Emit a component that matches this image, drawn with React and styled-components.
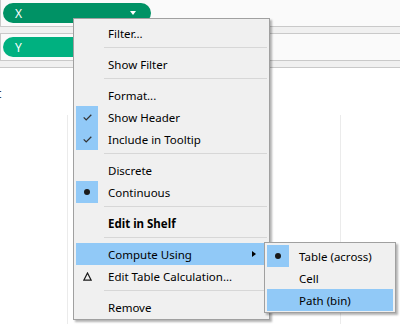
import React from 'react';
import styled, { createGlobalStyle } from 'styled-components';

const GlobalStyle = createGlobalStyle`
  html, body {
    margin: 0;
    padding: 0;
  }
  body {
    width: 400px;
    height: 324px;
    overflow: hidden;
    background: #ffffff;
    font-family: "Noto Sans", "Liberation Sans", sans-serif;
  }
`;

const Page = styled.div`
  position: relative;
  width: 400px;
  height: 324px;
  display: flex;
  flex-direction: column;
  overflow: hidden;
`;

const Shelves = styled.div`
  display: flex;
  flex-direction: column;
  gap: 6px;
  margin-top: -1px;
  padding-bottom: 6px;
  background: #f0f0f0;
`;

const ShelfRow = styled.div`
  height: 26px;
  display: flex;
  align-items: center;
  padding-left: 2px;
  background: #fafafa;
  border: 1px solid #c9c9c9;
  border-right: none;
`;

const Pill = styled.div`
  width: 148px;
  height: 20px;
  box-sizing: border-box;
  display: flex;
  align-items: center;
  padding: 0 15px 0 12px;
  border-radius: 10px;
  background: ${p => (p.$open ? '#009265' : '#00b180')};
  color: #ffffff;
  font-size: 12px;
`;

const Caret = styled.span`
  margin-left: auto;
  width: 0;
  height: 0;
  border-left: 3px solid transparent;
  border-right: 3px solid transparent;
  border-top: 4px solid #ffffff;
`;

const Canvas = styled.div`
  flex: 1;
  display: flex;
  flex-direction: column;
  background: #ffffff;
  border-top: 1px solid #c9c9c9;
`;

const CanvasHeader = styled.div`
  height: 47px;
  box-sizing: border-box;
  padding-top: 17px;
`;

const AxisLabel = styled.span`
  display: block;
  margin-left: -3px;
  font-size: 12px;
  color: #333c48;
`;

const GridBody = styled.div`
  flex: 1;
  display: grid;
  grid-template-columns: 68px 273px 1fr;
`;

const GridCell = styled.div`
  box-sizing: border-box;
  border-right: ${p => (p.$last ? 'none' : '1px solid #ebebeb')};
`;

const Menu = styled.div`
  position: absolute;
  left: 73px;
  top: 18px;
  width: 197px;
  box-sizing: border-box;
  padding: 3px 2px 1px;
  background: #f0f0f0;
  border: 1px solid #a0a0a0;
  box-shadow: 2px 2px 2px rgba(0, 0, 0, 0.3);
  font-size: 11.5px;
  color: #000000;
  z-index: 10;
`;

const SubMenu = styled(Menu)`
  left: calc(100% - 3px);
  top: -1px;
  width: 132px;
  padding: 2px 2px 1px;
  z-index: 20;
`;

const Item = styled.div`
  position: relative;
  height: 22px;
  display: grid;
  grid-template-columns: 22px 1fr auto;
  column-gap: 10px;
  align-items: center;
  background: ${p => (p.$active ? '#91c9f7' : 'transparent')};
  font-weight: ${p => (p.$bold ? 700 : 400)};
  white-space: nowrap;
`;

const IconCell = styled.span`
  width: 22px;
  height: 22px;
  display: flex;
  align-items: center;
  justify-content: center;
  background: ${p => (p.$on ? '#91c9f7' : 'transparent')};
`;

const Bullet = styled.span`
  width: 6px;
  height: 6px;
  border-radius: 50%;
  background: #1a1a1a;
`;

const Arrow = styled.span`
  margin-right: 11px;
  width: 0;
  height: 0;
  border-top: 3.5px solid transparent;
  border-bottom: 3.5px solid transparent;
  border-left: 4px solid #000000;
`;

const Separator = styled.div`
  height: 9px;
  box-sizing: border-box;
  padding-top: 3px;

  &::before {
    content: '';
    display: block;
    height: 1px;
    margin-left: 28px;
    background: #d7d7d7;
  }
`;

const Check = () => (
  <svg width="9" height="7" viewBox="0 0 9 7">
    <path d="M0.7 3.4 L3.2 5.9 L8.3 0.8" fill="none" stroke="#333333" strokeWidth="1.3" />
  </svg>
);

const Delta = () => (
  <svg width="9" height="9" viewBox="0 0 9 9">
    <path d="M4.5 1 L8.2 8.2 L0.8 8.2 Z" fill="none" stroke="#1a1a1a" strokeWidth="1.2" strokeLinejoin="miter" />
  </svg>
);

const MenuItem = ({ icon, on, active, bold, arrow, children }) => (
  <Item $active={active} $bold={bold}>
    <IconCell $on={on}>{icon}</IconCell>
    <span>{children}</span>
    {arrow ? <Arrow /> : <span />}
  </Item>
);

const App = () => (
  <>
    <GlobalStyle />
    <Page>
      <Shelves>
        <ShelfRow>
          <Pill $open>
            X
            <Caret />
          </Pill>
        </ShelfRow>
        <ShelfRow>
          <Pill>Y</Pill>
        </ShelfRow>
      </Shelves>
      <Canvas>
        <CanvasHeader>
          <AxisLabel>t</AxisLabel>
        </CanvasHeader>
        <GridBody>
          <GridCell />
          <GridCell />
          <GridCell $last />
        </GridBody>
      </Canvas>

      <Menu>
        <MenuItem>Filter...</MenuItem>
        <Separator />
        <MenuItem>Show Filter</MenuItem>
        <Separator />
        <MenuItem>Format...</MenuItem>
        <MenuItem on icon={<Check />}>Show Header</MenuItem>
        <MenuItem on icon={<Check />}>Include in Tooltip</MenuItem>
        <Separator />
        <MenuItem>Discrete</MenuItem>
        <MenuItem on icon={<Bullet />}>Continuous</MenuItem>
        <Separator />
        <MenuItem bold>Edit in Shelf</MenuItem>
        <Separator />
        <Item $active>
          <IconCell />
          <span>Compute Using</span>
          <Arrow />
          <SubMenu>
            <MenuItem on icon={<Bullet />}>Table (across)</MenuItem>
            <MenuItem>Cell</MenuItem>
            <MenuItem active>Path (bin)</MenuItem>
          </SubMenu>
        </Item>
        <MenuItem icon={<Delta />}>Edit Table Calculation...</MenuItem>
        <Separator />
        <MenuItem>Remove</MenuItem>
      </Menu>
    </Page>
  </>
);

export default App;
